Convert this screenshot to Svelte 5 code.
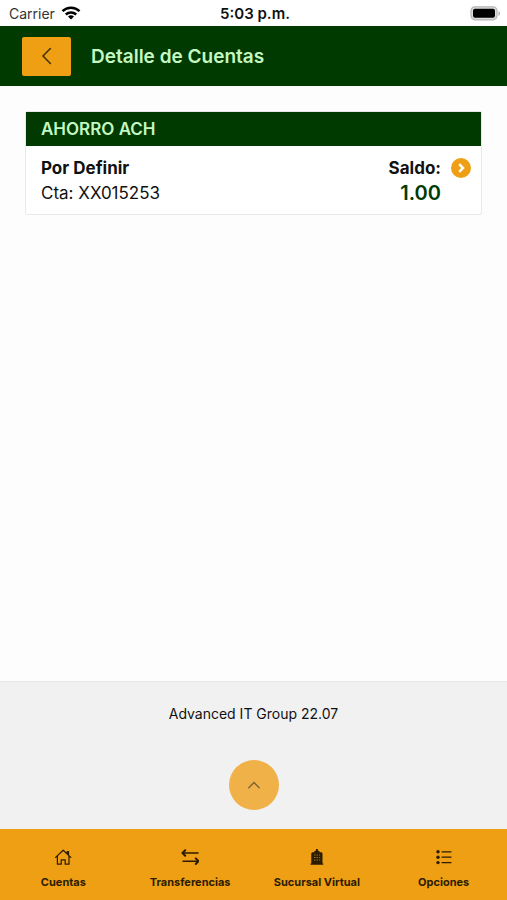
<script>
  let accounts = [
    {
      product: "AHORRO ACH",
      name: "Por Definir",
      number: "XX015253",
      balance: 1,
    },
  ];

  const tabs = [
    { id: "cuentas", label: "Cuentas" },
    { id: "transferencias", label: "Transferencias" },
    { id: "sucursal", label: "Sucursal Virtual" },
    { id: "opciones", label: "Opciones" },
  ];

  let page;

  function goBack() {
    history.back();
  }

  function scrollUp() {
    page.scrollIntoView({ behavior: "smooth" });
  }
</script>

<div class="page" bind:this={page}>
  <div class="status">
    <span class="carrier">
      Carrier
      <svg width="20" height="14" viewBox="0 0 20 14" fill="none" stroke="#000" stroke-width="2.5">
        <path d="M1.5 5.2a12.2 12.2 0 0 1 17 0" />
        <path d="M4.8 8.5a7.5 7.5 0 0 1 10.4 0" />
        <path d="M10 13.6 7 10.6a4.3 4.3 0 0 1 6 0z" fill="#000" stroke="none" />
      </svg>
    </span>
    <span class="time">5:03 p.m.</span>
    <svg class="battery" width="31" height="16" viewBox="0 0 31 16">
      <rect x="1" y="1.8" width="26" height="13" rx="4" fill="#ddd" stroke="#b5b5b5" stroke-width="1.2" />
      <rect x="3" y="3.8" width="22" height="9" rx="2" fill="#000" />
      <path d="M28.5 6v5c2-1 2-4 0-5z" fill="#aaa" />
    </svg>
  </div>

  <header>
    <button class="back" aria-label="Regresar" on:click={goBack}>
      <svg width="20" height="20" viewBox="0 0 20 20" fill="none" stroke="#3d3009" stroke-width="1.5" stroke-linecap="round">
        <path d="M13.4 2.5 6 10l7.4 7.5" />
      </svg>
    </button>
    <h1>Detalle de Cuentas</h1>
  </header>

  <main>
    {#each accounts as account}
      <section class="card">
        <h2>{account.product}</h2>
        <div class="card-body">
          <div class="info">
            <strong>{account.name}</strong>
            <span>Cta: {account.number}</span>
          </div>
          <div class="balance">
            <strong>Saldo:</strong>
            <span class="amount">{account.balance.toFixed(2)}</span>
          </div>
          <button class="detail" aria-label="Ver detalle">
            <svg width="20" height="20" viewBox="0 0 20 20">
              <circle cx="10" cy="10" r="10" fill="#ef9f14" />
              <path d="M8.2 6.2 12 10l-3.8 3.8" fill="none" stroke="#fff" stroke-width="2.5" />
            </svg>
          </button>
        </div>
      </section>
    {/each}
  </main>

  <footer>
    <p>Advanced IT Group 22.07</p>
    <button class="up" aria-label="Subir" on:click={scrollUp}>
      <svg width="14" height="14" viewBox="0 0 14 14" fill="none" stroke="#796433" stroke-width="1.3" stroke-linecap="round">
        <path d="M1.8 9.7 7 4.5l5.2 5.2" />
      </svg>
    </button>
  </footer>

  <nav>
    {#each tabs as tab}
      <a href="#{tab.id}">
        <svg width="18" height="18" viewBox="0 0 18 18" fill="none" stroke="#2b1c00" stroke-width="1.2" stroke-linecap="round" stroke-linejoin="round">
          {#if tab.id === "cuentas"}
            <path d="M1.6 9.4 9.2 2.2l7.6 7.2M3.4 8v8.2h3.8v-4.4h4v4.4H15V8M13.2 5.8V3.6h1.3v3.4" />
          {:else if tab.id === "transferencias"}
            <path d="M2 5h15M2 13.2h15" stroke-width="1.5" />
            <path d="M4.2 2.2 1.5 5l2.7 2.8M14.8 10.4l2.7 2.8-2.7 2.8" stroke-width="2" />
          {:else if tab.id === "sucursal"}
            <path d="M2.5 16.8V15.6h.8V5.2l1-1h2V3.2l1.7-.8V1h1.8v1.4l1.7.8v1h2l1 1v10.4h.8v1.2z" fill="#2b1c00" stroke="none" />
            <path d="M6 7h1.5M8.5 7H10M11 7h1.2M6 9.5h1.5M8.5 9.5H10M11 9.5h1.2M6 12h1.5M8.5 12H10M11 12h1.2" stroke="#9c6a10" stroke-width="1" stroke-linecap="butt" />
          {:else}
            <path d="M7 3.8h9M7 9.2h9M7 14.6h9" />
            <g fill="#2b1c00" stroke="none">
              <circle cx="3" cy="3.8" r="1.7" />
              <circle cx="3" cy="9.2" r="1.7" />
              <circle cx="3" cy="14.6" r="1.7" />
            </g>
          {/if}
        </svg>
        {tab.label}
      </a>
    {/each}
  </nav>
</div>

<style>
  :global(body) {
    margin: 0;
    background: #fdfdfd;
  }

  .page {
    display: flex;
    flex-direction: column;
    min-height: 100vh;
    font-family: Inter, "Liberation Sans", sans-serif;
    color: #111;
  }

  button {
    display: flex;
    align-items: center;
    justify-content: center;
    padding: 0;
    border: none;
    cursor: pointer;
  }

  .status {
    display: grid;
    grid-template-columns: 1fr auto 1fr;
    align-items: center;
    height: 26px;
    padding: 0 6px 0 9px;
    background: #fff;
    font-size: 14px;
  }

  .carrier {
    display: flex;
    align-items: center;
    gap: 6px;
    color: #333;
  }

  .time {
    font-size: 15px;
    font-weight: 600;
  }

  .battery {
    justify-self: end;
  }

  header {
    display: flex;
    align-items: center;
    gap: 20px;
    height: 60px;
    padding: 0 22px;
    background: #003a00;
  }

  .back {
    width: 49px;
    height: 39px;
    border-radius: 2px;
    background: #ef9f14;
  }

  h1 {
    margin: 0;
    font-size: 19px;
    font-weight: 600;
    color: #c4f8c0;
  }

  main {
    flex: 1;
    padding: 25px;
  }

  .card {
    border: 1px solid #e8e8e8;
    border-radius: 2px;
    background: #fff;
  }

  h2 {
    margin: 0;
    padding: 0 15px;
    background: #003a00;
    color: #c4f8c0;
    font-size: 17px;
    font-weight: 600;
    line-height: 34px;
  }

  .card-body {
    display: flex;
    align-items: flex-start;
    padding: 10px 10px 8px 15px;
    font-size: 17px;
    line-height: 25px;
  }

  .info,
  .balance {
    display: flex;
    flex-direction: column;
  }

  .info {
    flex: 1;
  }

  .balance {
    text-align: right;
  }

  strong {
    font-weight: 700;
  }

  .amount {
    color: #003a00;
    font-size: 20px;
    font-weight: 600;
  }

  .detail {
    margin: 2px 0 0 10px;
    background: none;
  }

  footer {
    display: flex;
    flex-direction: column;
    align-items: center;
    gap: 36px;
    padding: 22px 0 19px;
    border-top: 1px solid #e6e6e6;
    background: #f1f1f1;
  }

  p {
    margin: 0;
    font-size: 14px;
    line-height: 20px;
  }

  .up {
    width: 50px;
    height: 50px;
    border-radius: 50%;
    background: #efb148;
  }

  nav {
    display: grid;
    grid-template-columns: repeat(4, 1fr);
    background: #ef9f14;
  }

  a {
    display: flex;
    flex-direction: column;
    align-items: center;
    gap: 8px;
    padding: 19px 0 10px;
    color: #2b1c00;
    font-size: 11px;
    font-weight: 700;
    line-height: 16px;
    text-decoration: none;
  }
</style>
